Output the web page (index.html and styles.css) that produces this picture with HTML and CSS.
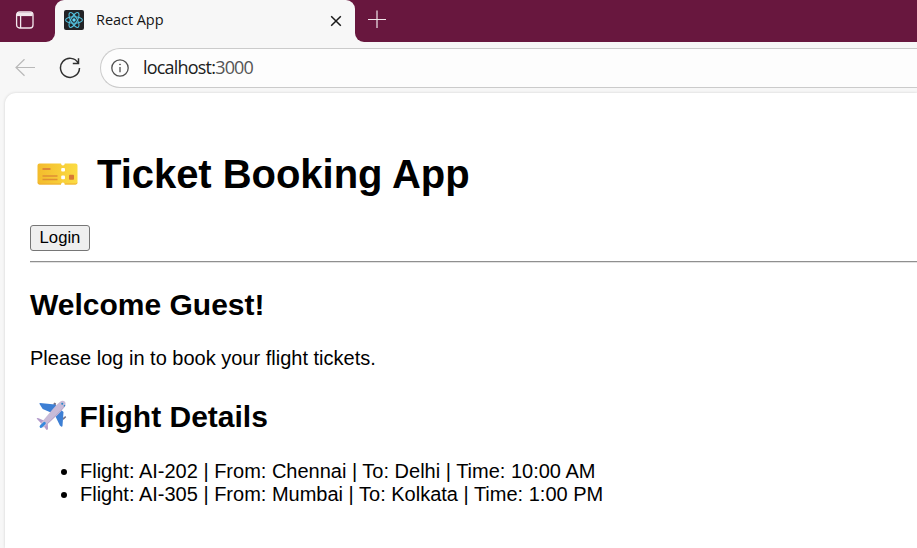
FILE: index.html
```html
<!DOCTYPE html>
<html lang="en">
<head>
<meta charset="utf-8">
<title>React App</title>
<link rel="stylesheet" href="styles.css">
</head>
<body>
<div class="tabs">
  <div class="side">
    <svg width="20" height="20" viewBox="0 0 20 20" fill="none" stroke="#f3e8ed" stroke-width="1.300"><rect x="1.600" y="1.800" width="16.400" height="16.200" rx="3"/><path d="M2 4.200h15.600" stroke-width="3.800"/><path d="M5.600 6v12"/></svg>
  </div>
  <div class="tab">
    <svg class="favicon" width="20" height="20" viewBox="0 0 20 20"><rect width="20" height="20" rx="2" fill="#222326"/><g fill="none" stroke="#53c1de" stroke-width="1.100"><ellipse cx="10" cy="10" rx="8.400" ry="3.200"/><ellipse cx="10" cy="10" rx="8.400" ry="3.200" transform="rotate(60 10 10)"/><ellipse cx="10" cy="10" rx="8.400" ry="3.200" transform="rotate(120 10 10)"/></g><circle cx="10" cy="10" r="1.700" fill="#61dafb"/></svg>
    <span class="tab-title">React App</span>
    <svg class="close" width="12" height="12" viewBox="0 0 12 12" stroke="#191919" stroke-width="1.500"><path d="M1.200 1.200l9.600 9.600M10.800 1.200L1.200 10.800"/></svg>
  </div>
  <div class="rest">
    <svg width="18" height="18" viewBox="0 0 18 18" stroke="#f1e6eb" stroke-width="1.200"><path d="M0 9.500h18M9 .5v18"/></svg>
  </div>
</div>
<div class="toolbar">
  <svg class="back" width="20" height="18" viewBox="0 0 20 18" fill="none" stroke="#b9b9b9" stroke-width="1.200"><path d="M20 8.500H1M9.500 .2L1 8.500l8.500 8.300"/></svg>
  <svg class="reload" width="22" height="22" viewBox="0 0 22 22" fill="none" stroke="#303030" stroke-width="1.500"><path d="M19.300 6.200A9.500 9.500 0 1 0 20.500 11M19.500 1.200v5.300h-5.700"/></svg>
  <div class="address">
    <svg width="18" height="18" viewBox="0 0 18 18" fill="none" stroke="#505050" stroke-width="1.300"><circle cx="9" cy="9" r="8.200"/><path d="M9 8v5.200"/><circle cx="9" cy="5.400" r=".5" fill="#505050" stroke-width=".8"/></svg>
    <span class="url">localhost:<span class="port">3000</span></span>
  </div>
</div>
<main class="page">
  <h1>
    <svg class="ticket" width="42" height="24" viewBox="0 0 42 24"><defs><linearGradient id="gold" x1="0" y1="0" x2="1" y2="0"><stop offset="0" stop-color="#f3bb2c"/><stop offset="1" stop-color="#fbdc43"/></linearGradient></defs><path d="M3.500 1.500H25q.2 2 1.900 2t1.900-2H39.500q2 0 2 2v17q0 2-2 2H28.800q-.2-2-1.900-2t-1.900 2H3.500q-2 0-2-2v-17q0-2 2-2z" fill="url(#gold)"/><path d="M2 20.800q.3 1.200 1.500 1.200H25M28.800 22h10.700q1.300 0 1.600-1.200" fill="none" stroke="#efad35"/><path d="M6.500 7h8" stroke="#de8637" stroke-width="2"/><path d="M6.500 14h15M6.500 17.500h15" stroke="#e08f34" stroke-width="1.600"/><rect x="25.200" y="6" width="3.800" height="3.600" rx="1" fill="#fff"/><rect x="25.200" y="13.600" width="3.800" height="3.600" rx="1" fill="#fff"/><rect x="33" y="12.800" width="5" height="5" rx=".8" fill="#d77935"/></svg>
    <span class="h1-text">Ticket Booking App</span>
  </h1>
  <button class="login" type="button">Login</button>
  <hr>
  <h2>Welcome Guest!</h2>
  <p>Please log in to book your flight tickets.</p>
  <h2 class="flights">
    <svg class="plane" width="32" height="32" viewBox="0 0 32 32"><path d="M18 4.200l1.500-1.600 1.600.8-.6 2.400zM27.800 18l2.500-2 .9 1.200-2.900 2.700z" fill="#777285"/><path d="M5 3Q4 3.100 4.700 4.300l3 4.600 9.300 4 3.500 3.500 4.400 9 1.600 1.300q.8.200 1-.9L28.500 12 20 4.400z" fill="#3d7fd4"/><path d="M1.600 18.500q.4-.9 2-.3l6.400 2.800 2.800 2.800.2 5q-.4 1.700-1.600.9L8.500 26z" fill="#b49bcb"/><path d="M29.700 1.400q2 2.400-.5 5.800-2.200 3.300-7.400 8.600L10.600 26.100q-3.600 2.500-4.900.9-1.100-1.400.9-4.800L17.200 9.700q4-5 7.600-7.800 2.800-2.200 4.900-.5z" fill="#c9bbd8"/><path d="M30.200 6L10.800 25.200" stroke="#b9a9cc" stroke-width="1"/><path d="M6 26.500l3.400-3.200" stroke="#3488dd" stroke-width="2.800" stroke-linecap="round"/><path d="M26.500 3.200l1.400 1M29 5.300l.8.800" stroke="#2688c8" stroke-width="1.700"/></svg>
    <span class="h2-text">Flight Details</span>
  </h2>
  <ul>
    <li>Flight: AI-202 | From: Chennai | To: Delhi | Time: 10:00 AM</li>
    <li>Flight: AI-305 | From: Mumbai | To: Kolkata | Time: 1:00 PM</li>
  </ul>
</main>
</body>
</html>
```
FILE: styles.css
```css
* { box-sizing: border-box; }
body {
  margin: 0;
  height: 548px;
  overflow: hidden;
  display: flex;
  flex-direction: column;
  background: #f7f7f7;
  font-family: "Liberation Sans", Arial, sans-serif;
}
svg { display: block; flex: none; }
.tabs { display: flex; height: 42px; flex: none; }
.side { width: 55px; padding: 10px 0 0 15px; background: #68173e; border-bottom-right-radius: 9px; }
.tab {
  width: 300px;
  display: flex;
  align-items: center;
  padding: 0 13px 2px 9px;
  background: linear-gradient(#68173e, #68173e) top / 100% 10px no-repeat;
  position: relative;
}
.tab::before {
  content: "";
  position: absolute;
  inset: 0;
  background: #f7f7f7;
  border-radius: 9px 9px 0 0;
}
.tab > * { position: relative; }
.tab-title { margin-left: 12px; flex: 1; font: 14.5px/20px "Open Sans", sans-serif; letter-spacing: -.05px; color: #151515; }
.close { margin-top: 1px; }
.rest { flex: 1; padding: 10px 0 0 13px; background: #68173e; border-bottom-left-radius: 9px; }
.toolbar { height: 51px; flex: none; display: flex; align-items: center; padding-left: 15px; }
.reload { margin-left: 24px; }
.address {
  flex: 1;
  height: 40px;
  margin-left: 19px;
  padding-left: 10px;
  display: flex;
  align-items: center;
  background: #fdfdfd;
  border: 1px solid #cbcbcb;
  border-right: 0;
  border-radius: 20px 0 0 20px;
}
.url { margin: 0 0 2px 14px; font: 18px/24px "Open Sans", sans-serif; letter-spacing: -.8px; color: #202020; }
.port { color: #555; }
.page {
  flex: 1;
  margin-left: 5px;
  padding: 57px 0 0 25px;
  background: #fff;
  border-top-left-radius: 11px;
  box-shadow: 0 0 3px #d0d0d0;
  color: #000;
}
h1 { display: flex; align-items: center; height: 48px; margin: 0; padding-left: 6px; font-size: 40px; line-height: 48px; }
.h1-text { margin-left: 19px; letter-spacing: -.04px; }
.login {
  display: block;
  width: 60px;
  height: 26px;
  margin: 27px 0 10px;
  padding: 0;
  border: 1px solid #767676;
  border-radius: 3px;
  background: #efefef;
  color: #000;
  font: 16.667px/22px "Liberation Sans", Arial, sans-serif;
}
hr { height: 2px; margin: 0; border: 0; border-top: 1px solid #8f8f8f; border-bottom: 1px solid #e2e2e2; }
h2 { margin: 25px 0 0; font-size: 30px; line-height: 34px; }
p { margin: 25px 0 0; font-size: 20px; line-height: 23px; }
.flights { display: flex; align-items: center; height: 34px; margin-top: 30px; padding-left: 5px; }
.plane { margin-top: -2px; }
.h2-text { margin-left: 12.5px; }
ul { margin: 26px 0 0; padding-left: 50px; font-size: 20px; line-height: 23px; }
```
